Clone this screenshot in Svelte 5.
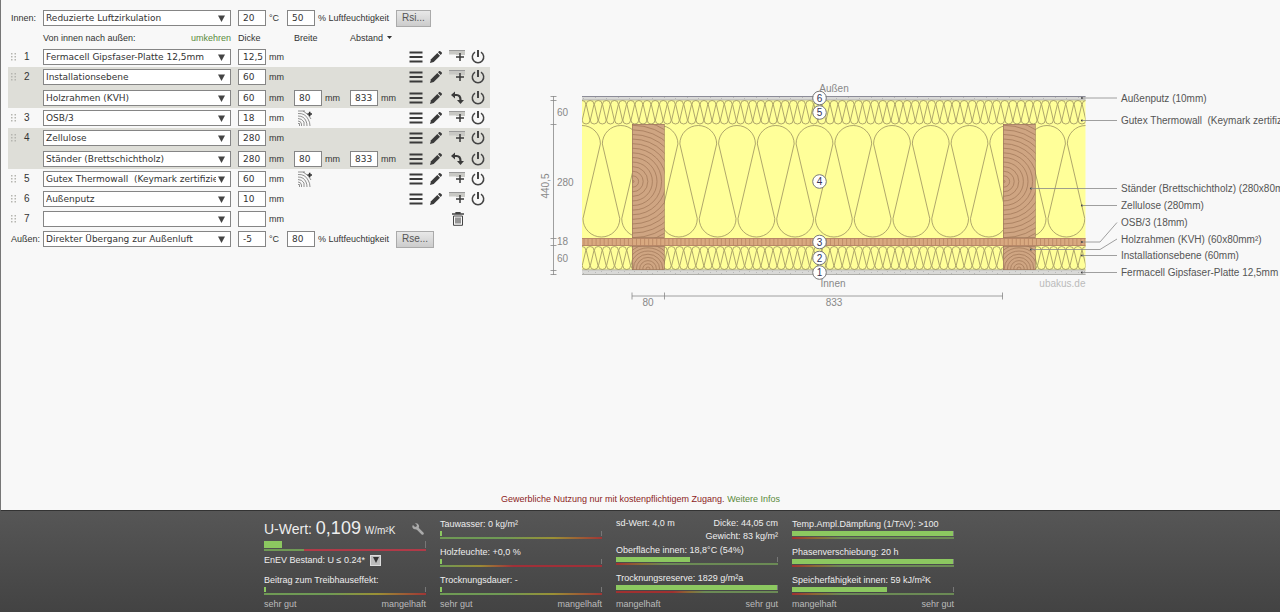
<script>
  const layers = [
    { nr: 1, rows: [{ name: "Fermacell Gipsfaser-Platte 12,5mm", dicke: "12,5" }] },
    {
      nr: 2,
      rows: [
        { name: "Installationsebene", dicke: "60" },
        { name: "Holzrahmen (KVH)", dicke: "60", breite: "80", abstand: "833" }
      ]
    },
    { nr: 3, rows: [{ name: "OSB/3", dicke: "18", wood: true }] },
    {
      nr: 4,
      rows: [
        { name: "Zellulose", dicke: "280" },
        { name: "Ständer (Brettschichtholz)", dicke: "280", breite: "80", abstand: "833" }
      ]
    },
    { nr: 5, rows: [{ name: "Gutex Thermowall\u00a0 (Keymark zertifiziert)", dicke: "60", wood: true }] },
    { nr: 6, rows: [{ name: "Außenputz", dicke: "10" }] },
    { nr: 7, rows: [{ name: "", dicke: "", empty: true }] }
  ];

  // insulation batting: one continuous loop line between top and bottom
  function loops(x, count, pitch, top, bottom) {
    const r = pitch * 0.475;
    let d = `M${x - r} ${top + r}`;
    for (let i = 0; i <= count; i++) {
      const c = x + i * pitch;
      const b = c + pitch / 2;
      d += `A${r} ${r} 0 0 1 ${c + r} ${top + r}`;
      d += `L${b - r} ${bottom - r}A${r} ${r} 0 0 0 ${b + r} ${bottom - r}`;
      d += `L${c + pitch - r} ${top + r}`;
    }
    return d;
  }

  const range = (n) => Array.from({ length: n }, (_, i) => i);
  const studs = [92, 463];
  const dims = [16.5, 20.5, 44.5, 158.5, 165.5, 190.5, 194.5];
  const marks = [
    { nr: 6, y: 18 },
    { nr: 5, y: 32.5 },
    { nr: 4, y: 101.5 },
    { nr: 3, y: 162 },
    { nr: 2, y: 178 },
    { nr: 1, y: 192.5 }
  ];
  const legend = [
    { text: "Außenputz (10mm)", y: 18, from: [542, 18] },
    { text: "Gutex Thermowall\u00a0 (Keymark zertifiziert) (60mm)", y: 40.5, from: [542, 40.5] },
    { text: "Ständer (Brettschichtholz) (280x80mm²)", y: 108.5, from: [491, 108.5] },
    { text: "Zellulose (280mm)", y: 125.5, from: [542, 125.5] },
    { text: "OSB/3 (18mm)", y: 142.5, from: [542, 162] },
    { text: "Holzrahmen (KVH) (60x80mm²)", y: 159, from: [491, 169.5] },
    { text: "Installationsebene (60mm)", y: 175.5, from: [542, 175.5] },
    { text: "Fermacell Gipsfaser-Platte 12,5mm (12,5mm)", y: 192.5, from: [542, 192.5] }
  ];
</script>

{#snippet picker(name, label)}
  <div class="picker">
    <select aria-label={label}>
      <option>{name}</option>
    </select>
    <svg class="arrow" width="7" height="7" viewBox="0 0 7 7"><path d="M0 0.5H7L3.5 7Z" fill="#444" /></svg>
  </div>
{/snippet}

{#snippet size(value, label, unit)}
  <label class="size">
    <input type="text" {value} aria-label={label} />
    <span>{unit}</span>
  </label>
{/snippet}

{#snippet climate(side, name, temp, humidity, button)}
  <div class="climate">
    <span class="side">{side}:</span>
    {@render picker(name, side)}
    {@render size(temp, side + " Temperatur", "°C")}
    {@render size(humidity, side + " Luftfeuchtigkeit", "% Luftfeuchtigkeit")}
    <button class="rs">{button}</button>
  </div>
{/snippet}

{#snippet stat(text, value, scale)}
  <div class="stat">
    <div class="label">{text}</div>
    <div class="bar"><div class="fill" style="width:{value}%"></div></div>
    <div class="scale {scale}"></div>
  </div>
{/snippet}

<div class="page">
  <main>
    <div class="work">
      <form class="layers" on:submit|preventDefault>
        {@render climate("Innen", "Reduzierte Luftzirkulation", "20", "50", "Rsi...")}
        <div class="head">
          <div class="direction"><span>Von innen nach außen:</span><a href="#umkehren">umkehren</a></div>
          <span>Dicke</span>
          <span>Breite</span>
          <span class="spacing">
            Abstand
            <svg width="5" height="3" viewBox="0 0 5 3"><path d="M0 0H5L2.5 3Z" fill="#333" /></svg>
          </span>
        </div>

        {#each layers as layer}
          <div class="layer" class:double={layer.rows.length > 1}>
            {#each layer.rows as row, i}
              <div class="row">
                {#if i === 0}
                  <svg class="grip" width="6" height="8" viewBox="0 0 6 8" fill="#b5b5b0">
                    {#each [0, 3, 6] as y}
                      <rect x="0" {y} width="1.5" height="1.5" />
                      <rect x="3.5" {y} width="1.5" height="1.5" />
                    {/each}
                  </svg>
                  <span class="nr">{layer.nr}</span>
                {/if}
                {@render picker(row.name, "Schicht " + layer.nr)}
                {@render size(row.dicke, "Dicke", "mm")}
                {#if row.breite}
                  {@render size(row.breite, "Breite", "mm")}
                  {@render size(row.abstand, "Abstand", "mm")}
                {/if}
                {#if row.wood}
                  <button class="icon wood" aria-label="Balkenlage einfügen">
                    <svg width="16" height="16" viewBox="0 0 16 16" fill="none" stroke="#777" stroke-width=".8">
                      <path d="M1 1H8M1 3.5Q8 3 11 9Q13 12 13 16M1 6Q7 6 9 11Q10 13 10 16M1 8.5Q5 8.5 7 12V16M1 11Q4 11 4.5 14V16M6 1Q12 4 14 9M1 13.5H2.5V16" />
                      <path d="M10.5 4H15M12.7 1.8V6.3" stroke="#333" stroke-width="1.6" />
                    </svg>
                  </button>
                {/if}
                <div class="tools">
                  {#if row.empty}
                    <button class="icon trash" aria-label="Löschen">
                      <svg width="12" height="14" viewBox="0 0 12 14" fill="none" stroke="#444">
                        <path d="M0 2H12M4 1.2V.5H8V1.2" stroke-width="1.3" />
                        <path d="M1.5 4H10.5V13.3H1.5Z" />
                        <path d="M4 5.5V11.5M6 5.5V11.5M8 5.5V11.5" stroke-width="1.1" />
                      </svg>
                    </button>
                  {:else}
                    <button class="icon" aria-label="Material wählen">
                      <svg width="14" height="14" viewBox="0 0 14 14" stroke="#3a3a3a" stroke-width="2">
                        <path d="M.5 2.5H13.5M.5 7H13.5M.5 11.5H13.5" />
                      </svg>
                    </button>
                    <button class="icon" aria-label="Bearbeiten">
                      <svg width="14" height="14" viewBox="0 0 14 14" fill="#3a3a3a">
                        <path d="M1 13L2 9.3L8.3 3L11 5.7L4.7 12Z" />
                        <path d="M9 2.3L10.2 1.1Q10.8 .7 11.4 1.2L12.8 2.6Q13.3 3.2 12.8 3.8L11.7 5Z" />
                      </svg>
                    </button>
                    {#if row.breite}
                      <button class="icon" aria-label="Drehen">
                        <svg width="16" height="14" viewBox="0 0 16 14">
                          <path d="M5 4H7.5Q11.5 4 11.5 9" fill="none" stroke="#3a3a3a" stroke-width="2.2" />
                          <path d="M2 4L6 .5V7.5ZM11.5 13L8 9H15Z" fill="#3a3a3a" />
                        </svg>
                      </button>
                    {:else}
                      <button class="icon" aria-label="Schicht einfügen">
                        <svg width="16" height="14" viewBox="0 0 16 14">
                          <path d="M0 .5H16V5H7V4.5H0Z" fill="#c8c8c4" />
                          <path d="M0 .5H16" stroke="#999" />
                          <path d="M7 7H15M11 3V11" stroke="#3a3a3a" stroke-width="1.5" />
                        </svg>
                      </button>
                    {/if}
                    <button class="icon" aria-label="Deaktivieren">
                      <svg width="14" height="14" viewBox="0 0 14 14" fill="none" stroke="#444" stroke-width="1.5">
                        <path d="M4 2.2A5.7 5.7 0 1 0 10 2.2" />
                        <path d="M7 0V7" stroke-width="2" />
                      </svg>
                    </button>
                  {/if}
                </div>
              </div>
            {/each}
          </div>
        {/each}

        {@render climate("Außen", "Direkter Übergang zur Außenluft", "-5", "80", "Rse...")}
      </form>

      <div class="sketch">
        <svg width="790" height="240" viewBox="0 0 790 240">
          <defs>
            <pattern id="plaster" width="23" height="5" patternUnits="userSpaceOnUse">
              <rect width="23" height="5" fill="#d9d9d7" />
              <path d="M2 1L3 2M9 3L10 2M15 1.5H16M20 4L21 3" stroke="#aaa" stroke-width=".7" />
            </pattern>
            <clipPath id="wall"><rect x="42" y="16" width="503.5" height="179" /></clipPath>
            <clipPath id="stud"><rect width="32.5" height="114" /></clipPath>
            <clipPath id="batten"><rect width="32.5" height="24" /></clipPath>
          </defs>

          <g clip-path="url(#wall)">
            <rect x="42" y="20" width="504" height="171" fill="#ffff99" />
            <rect x="42" y="16" width="504" height="4" fill="url(#plaster)" />
            <rect x="42" y="190" width="504" height="5" fill="url(#plaster)" />
            <path d="M42 16.5H546" stroke="#8c8c98" />
            <path d="M42 194.5H546M42 189.8H546M42 20H546" stroke="#a5a5a0" stroke-width=".8" />
            <g fill="none" stroke="#9a9060" stroke-width=".8">
              <path d={loops(42, 62, 8.13, 20.5, 44)} />
              <path d={loops(42, 13, 38.75, 45.5, 157)} />
              <path d={loops(42, 62, 8.13, 166.5, 189.5)} />
            </g>
            <rect x="42" y="158" width="504" height="8" fill="#d9a980" />
            {#each range(125) as i}
              <path d="M{44 + i * 4.04} 158.5V165.5" stroke="#b98763" stroke-width=".8" />
            {/each}
            <path d="M42 158.5H546M42 165.5H546" stroke="#b08062" stroke-width=".8" />
          </g>

          {#each studs as x}
            <g transform="translate({x} 44)" clip-path="url(#stud)">
              <rect width="32.5" height="114" fill="#cfa582" stroke="#8a664c" />
              {#each range(17) as i}
                <circle cx="1" cy="57.5" r={1 + i * 4.6} fill="none" stroke="#a57b5c" stroke-width=".8" />
              {/each}
            </g>
            <g transform="translate({x} 166)" clip-path="url(#batten)">
              <rect width="32.5" height="24" fill="#cfa582" stroke="#8a664c" />
              {#each range(8) as i}
                <circle cx="16" cy="23" r={2 + i * 3.2} fill="none" stroke="#a57b5c" stroke-width=".8" />
              {/each}
            </g>
          {/each}

          <g stroke="#888" stroke-width=".8">
            <path d="M13.5 16V195M92 216H463" />
            {#each dims as y}
              <path d="M10.5 {y}H16.5" />
            {/each}
            {#each [92, 124.5, 462.5] as x}
              <path d="M{x} 212.5V219.5" />
            {/each}
          </g>
          <g class="dim">
            <text x="17" y="36">60</text>
            <text x="17" y="105.5">280</text>
            <text x="17" y="165">18</text>
            <text x="17" y="181.5">60</text>
            <text x="108" y="226" text-anchor="middle">80</text>
            <text x="294" y="226" text-anchor="middle">833</text>
            <text transform="translate(9 106) rotate(-90)" text-anchor="middle">440,5</text>
            <text x="294" y="12" text-anchor="middle">Außen</text>
            <text x="293" y="206.5" text-anchor="middle">Innen</text>
            <text class="brand" x="545.5" y="206.5" text-anchor="end">ubakus.de</text>
          </g>

          {#each marks as mark}
            <circle cx="279.5" cy={mark.y} r="6.8" fill="#fff" stroke="#777" />
            <text class="mark" x="279.5" y={mark.y + 3.5} text-anchor="middle">{mark.nr}</text>
          {/each}

          {#each legend as item}
            <circle cx={item.from[0]} cy={item.from[1]} r="1.1" fill="#444" />
            <polyline
              points="{item.from.join(' ')} {item.from[1] === item.y ? 558 : 560} {item.from[1]} 577 {item.y}"
              fill="none" stroke="#888" stroke-width=".8" />
            <text class="legend" x="581" y={item.y + 3.5}>{item.text}</text>
          {/each}
        </svg>
      </div>
    </div>

    <p class="notice">Gewerbliche Nutzung nur mit kostenpflichtigem Zugang. <a href="#infos">Weitere Infos</a></p>
  </main>

  <footer>
    <section>
      <div class="uwert">
        <span>U-Wert: <b>0,109</b> <small>W/m²K</small></span>
        <button class="icon" aria-label="Einstellungen">
          <svg width="12" height="12" viewBox="0 0 12 12">
            <path d="M5.5 5.5L10.5 10.5" stroke="#aaa" stroke-width="2.5" stroke-linecap="round" />
            <path d="M1 2L3 4L4.5 3.5L5 2L3 .3Q6 -.4 7 2.5Q7.5 6 4.5 6.5Q1 6.5 .3 4Q.2 2.8 1 2Z" fill="#aaa" />
          </svg>
        </button>
      </div>
      <div class="bar tall"><div class="fill" style="width:11%"></div></div>
      <div class="scale limit"></div>
      <div class="enev">
        <span>EnEV Bestand: U ≤ 0.24*</span>
        <button aria-label="Anforderung wählen">
          <svg width="6" height="6" viewBox="0 0 6 6"><path d="M0 0H6L3 6Z" fill="#333" /></svg>
        </button>
      </div>
      {@render stat("Beitrag zum Treibhauseffekt:", 1, "falling")}
      <div class="ends"><span>sehr gut</span><span>mangelhaft</span></div>
    </section>
    <section>
      {@render stat("Tauwasser: 0 kg/m²", 1, "falling")}
      {@render stat("Holzfeuchte: +0,0 %", 1, "steep")}
      {@render stat("Trocknungsdauer: -", 1, "falling")}
      <div class="ends"><span>sehr gut</span><span>mangelhaft</span></div>
    </section>
    <section>
      <div class="facts"><span>sd-Wert: 4,0 m</span><span>Dicke: 44,05 cm<br />Gewicht: 83 kg/m²</span></div>
      {@render stat("Oberfläche innen: 18,8°C (54%)", 46, "rising")}
      {@render stat("Trocknungsreserve: 1829 g/m²a", 100, "late")}
      <div class="ends"><span>mangelhaft</span><span>sehr gut</span></div>
    </section>
    <section>
      {@render stat("Temp.Ampl.Dämpfung (1/TAV): >100", 100, "rising")}
      {@render stat("Phasenverschiebung: 20 h", 100, "rising")}
      {@render stat("Speicherfähigkeit innen: 59 kJ/m²K", 59, "rising")}
      <div class="ends"><span>mangelhaft</span><span>sehr gut</span></div>
    </section>
  </footer>
</div>

<style>
  :global(body) {
    margin: 0;
    background: #f8f8f8;
  }
  .page {
    min-height: 100vh;
    display: flex;
    flex-direction: column;
    font-family: "Liberation Sans", Arial, sans-serif;
    font-size: 9px;
    line-height: 14px;
    color: #333;
  }
  main {
    flex: 1;
    display: flex;
    flex-direction: column;
    justify-content: space-between;
    border-left: 1px solid #777;
    border-bottom: 1px solid #333;
  }
  a {
    color: #5a8a3c;
    text-decoration: none;
  }
  button {
    font: inherit;
    cursor: pointer;
  }

  .work {
    display: flex;
    overflow: hidden;
  }
  .layers {
    flex: none;
    width: 482px;
    padding: 8px 0 0 7px;
  }
  .climate,
  .row,
  .head {
    display: grid;
    grid-template-columns: 16px 19px 195px 56px 56px 59px 80px;
    align-items: center;
    height: 20px;
  }
  .climate {
    grid-template-columns: 35px 195px 49px 109px auto;
    justify-content: start;
  }
  .side {
    padding-left: 3px;
  }
  .head {
    height: 19px;
  }
  .direction {
    grid-column: 3;
    display: flex;
    justify-content: space-between;
    padding-right: 7px;
  }
  .spacing {
    display: flex;
    align-items: center;
    gap: 4px;
    white-space: nowrap;
  }
  .double {
    display: grid;
    row-gap: 1px;
    background: #deded8;
  }
  .grip {
    padding-left: 3px;
  }
  .nr {
    font-size: 10px;
  }
  .picker {
    grid-column: 3;
    display: grid;
    align-items: center;
    width: 188px;
  }
  .climate .picker {
    grid-column: 2;
  }
  .picker > * {
    grid-area: 1 / 1;
  }
  select,
  input {
    box-sizing: border-box;
    height: 16px;
    margin: 0;
    border: 1px solid #858585;
    border-radius: 0;
    background: #fff;
    color: #333;
    font: 9px "DejaVu Sans", Verdana, sans-serif;
  }
  select {
    appearance: none;
    width: 100%;
    padding: 0 14px 0 2px;
  }
  input {
    width: 28px;
    padding: 0 0 0 4px;
  }
  .arrow {
    justify-self: end;
    margin-right: 6px;
    pointer-events: none;
  }
  .size {
    display: flex;
    align-items: center;
    gap: 3px;
    white-space: nowrap;
  }
  .rs {
    height: 17px;
    padding: 0 5px;
    border: 1px solid #aaa;
    background: linear-gradient(#e8e8e8, #ccc);
    color: #555;
    font-size: 10px;
    line-height: 14px;
  }
  .icon {
    display: flex;
    padding: 0;
    border: 0;
    background: none;
  }
  .wood {
    padding-left: 3px;
  }
  .tools {
    grid-column: 7;
    display: flex;
    align-items: center;
    gap: 6px;
  }
  .trash {
    padding-left: 43px;
  }

  .sketch {
    flex: 1;
    min-width: 0;
    padding: 80px 0 0 50px;
    overflow: hidden;
  }
  .sketch > svg {
    display: block;
  }
  .dim {
    font-size: 10px;
    fill: #888;
  }
  .brand {
    fill: #bbb;
  }
  .legend {
    font-size: 10px;
    fill: #555;
  }
  .mark {
    font-size: 10px;
    fill: #333355;
  }

  .notice {
    margin: 0;
    padding-bottom: 4px;
    text-align: center;
    color: #8c1c1c;
  }

  footer {
    display: flex;
    justify-content: center;
    gap: 14px;
    padding: 6px 62px 1px 0;
    background: linear-gradient(#565656, #434343);
    color: #eee;
  }
  section {
    display: flex;
    flex-direction: column;
    width: 162px;
  }
  .uwert {
    display: flex;
    justify-content: space-between;
    align-items: center;
    height: 24px;
    padding-right: 2px;
    font-size: 14px;
    line-height: 20px;
  }
  .uwert b {
    font-size: 18px;
    font-weight: normal;
  }
  .uwert small {
    font-size: 10px;
  }
  .enev {
    display: flex;
    align-items: center;
    gap: 5px;
    height: 14px;
    margin-top: 2px;
  }
  .enev button {
    display: grid;
    place-items: center;
    width: 11px;
    height: 11px;
    padding: 0;
    border: 1px solid #ddd;
    background: #bbb;
  }
  .facts {
    display: flex;
    justify-content: space-between;
    text-align: right;
    line-height: 13px;
  }
  .stat {
    margin-top: 6px;
  }
  .stat:first-child,
  .facts + .stat {
    margin-top: 0;
  }
  .label {
    white-space: nowrap;
  }
  .bar {
    height: 5px;
    margin-bottom: 1px;
    border-right: 1px solid #777;
  }
  .bar.tall {
    height: 7px;
  }
  .fill {
    height: 100%;
    background: #8cc860;
  }
  .scale {
    height: 2px;
  }
  .falling {
    background: linear-gradient(to right, #6f9a55 40%, #9a9035 70%, #a03535);
  }
  .steep {
    background: linear-gradient(to right, #6f9a55, #9a8a35 25%, #a03038 45%);
  }
  .limit {
    background: linear-gradient(to right, #6f9a55 25%, #b03a48 25%);
  }
  .rising {
    background: linear-gradient(to right, #a03030, #8a6a35 15%, #6b8a55 30%);
  }
  .late {
    background: linear-gradient(to right, #a03030 35%, #8a6a35 45%, #6b8a55 55%);
  }
  .ends {
    display: flex;
    justify-content: space-between;
    margin-top: auto;
    padding-top: 2px;
    color: #bbb;
  }
</style>
